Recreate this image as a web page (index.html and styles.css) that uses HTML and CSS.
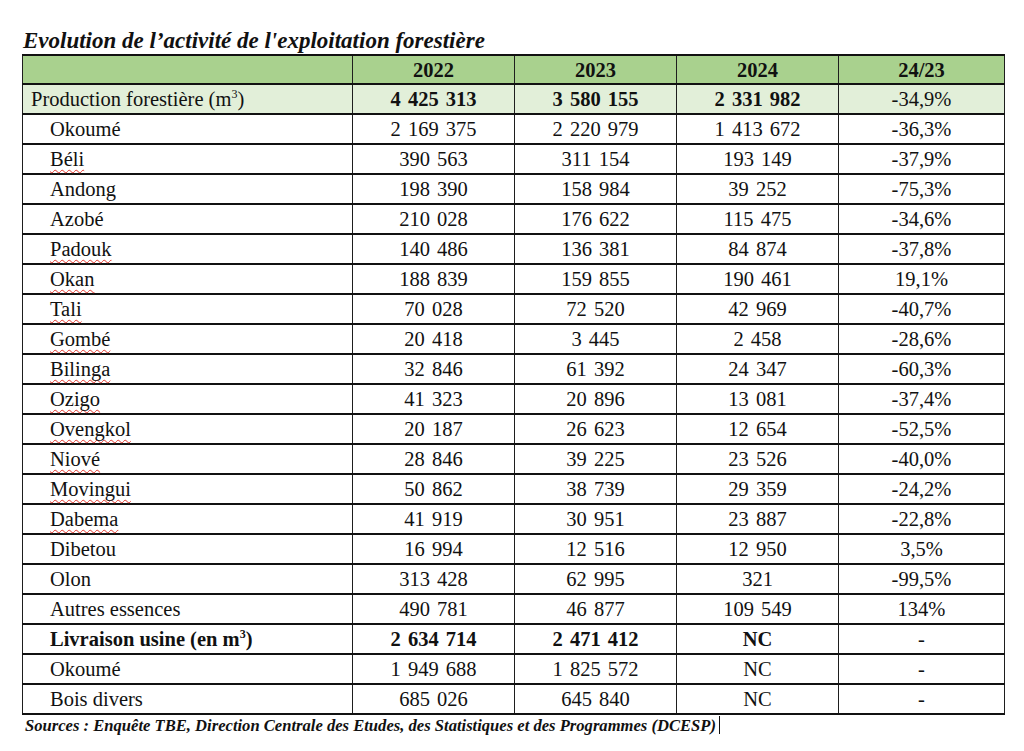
FILE: index.html
```html
<!DOCTYPE html>
<html lang="fr">
<head>
<meta charset="utf-8">
<title>Evolution de l'activité de l'exploitation forestière</title>
<link rel="stylesheet" href="styles.css">
</head>
<body>
<div class="page">
  <h1 class="title">Evolution de l’activité de l'exploitation forestière</h1>
  <table class="data">
    <colgroup>
      <col class="c-label"><col class="c-num"><col class="c-num"><col class="c-num"><col class="c-pct">
    </colgroup>
    <thead>
      <tr class="head"><th></th><th>2022</th><th>2023</th><th>2024</th><th>24/23</th></tr>
    </thead>
    <tbody>
      <tr class="total"><td class="lbl">Production forestière (m<sup>3</sup>)</td><td class="b">4 425 313</td><td class="b">3 580 155</td><td class="b">2 331 982</td><td>-34,9%</td></tr>
      <tr><td class="lbl ind">Okoumé</td><td>2 169 375</td><td>2 220 979</td><td>1 413 672</td><td>-36,3%</td></tr>
      <tr><td class="lbl ind"><span class="sp">Béli</span></td><td>390 563</td><td>311 154</td><td>193 149</td><td>-37,9%</td></tr>
      <tr><td class="lbl ind">Andong</td><td>198 390</td><td>158 984</td><td>39 252</td><td>-75,3%</td></tr>
      <tr><td class="lbl ind">Azobé</td><td>210 028</td><td>176 622</td><td>115 475</td><td>-34,6%</td></tr>
      <tr><td class="lbl ind"><span class="sp">Padouk</span></td><td>140 486</td><td>136 381</td><td>84 874</td><td>-37,8%</td></tr>
      <tr><td class="lbl ind"><span class="sp">Okan</span></td><td>188 839</td><td>159 855</td><td>190 461</td><td>19,1%</td></tr>
      <tr><td class="lbl ind"><span class="sp">Tali</span></td><td>70 028</td><td>72 520</td><td>42 969</td><td>-40,7%</td></tr>
      <tr><td class="lbl ind"><span class="sp">Gombé</span></td><td>20 418</td><td>3 445</td><td>2 458</td><td>-28,6%</td></tr>
      <tr><td class="lbl ind"><span class="sp">Bilinga</span></td><td>32 846</td><td>61 392</td><td>24 347</td><td>-60,3%</td></tr>
      <tr><td class="lbl ind"><span class="sp">Ozigo</span></td><td>41 323</td><td>20 896</td><td>13 081</td><td>-37,4%</td></tr>
      <tr><td class="lbl ind"><span class="sp">Ovengkol</span></td><td>20 187</td><td>26 623</td><td>12 654</td><td>-52,5%</td></tr>
      <tr><td class="lbl ind"><span class="sp">Niové</span></td><td>28 846</td><td>39 225</td><td>23 526</td><td>-40,0%</td></tr>
      <tr><td class="lbl ind"><span class="sp">Movingui</span></td><td>50 862</td><td>38 739</td><td>29 359</td><td>-24,2%</td></tr>
      <tr><td class="lbl ind"><span class="sp">Dabema</span></td><td>41 919</td><td>30 951</td><td>23 887</td><td>-22,8%</td></tr>
      <tr><td class="lbl ind">Dibetou</td><td>16 994</td><td>12 516</td><td>12 950</td><td>3,5%</td></tr>
      <tr><td class="lbl ind">Olon</td><td>313 428</td><td>62 995</td><td>321</td><td>-99,5%</td></tr>
      <tr><td class="lbl ind">Autres essences</td><td>490 781</td><td>46 877</td><td>109 549</td><td>134%</td></tr>
      <tr><td class="lbl ind b">Livraison usine (en m<sup>3</sup>)</td><td class="b">2 634 714</td><td class="b">2 471 412</td><td class="b">NC</td><td>-</td></tr>
      <tr><td class="lbl ind">Okoumé</td><td>1 949 688</td><td>1 825 572</td><td>NC</td><td>-</td></tr>
      <tr><td class="lbl ind">Bois divers</td><td>685 026</td><td>645 840</td><td>NC</td><td>-</td></tr>
    </tbody>
  </table>
  <p class="source">Sources : Enquête TBE, Direction Centrale des Etudes, des Statistiques et des Programmes (DCESP)<span class="caret"></span></p>
</div>
</body>
</html>
```

FILE: styles.css
```css
html, body {
  margin: 0;
  padding: 0;
  background: #ffffff;
}

body {
  font-family: "Liberation Serif", "Times New Roman", serif;
  color: #111111;
}

.page {
  width: 982px;
  padding: 27px 0 0 22px;
}

.title {
  margin: 0;
  height: 27px;
  font-size: 23px;
  line-height: 27px;
  font-weight: bold;
  font-style: italic;
  padding-left: 1px;
}

.data {
  border-collapse: collapse;
  table-layout: fixed;
  width: 982px;
  font-size: 20.5px;
}

.c-label { width: 330px; }
.c-num { width: 162px; }
.c-pct { width: 166px; }

.data th,
.data td {
  height: 28px;
  padding: 0;
  text-align: center;
  border-left: 1px solid #1e1e1e;
  border-right: 1px solid #1e1e1e;
  border-top: 2px solid #111111;
  border-bottom: 2px solid #111111;
  line-height: 26px;
  vertical-align: middle;
  white-space: nowrap;
  word-spacing: 2px;
}

.data th {
  font-weight: bold;
}

.head th {
  background: #a9d18e;
  height: 27px;
}

.total td {
  background: #e2efd9;
}

.data td.lbl {
  text-align: left;
  padding-left: 8px;
  word-spacing: 0;
}

.data td.ind {
  padding-left: 27px;
}

.b {
  font-weight: bold;
}

sup {
  font-size: 12px;
  line-height: 0;
  vertical-align: 8px;
}

.sp {
  text-decoration: underline wavy #e0362c;
  text-decoration-thickness: 1px;
  text-underline-offset: 3px;
  text-decoration-skip-ink: none;
}

.source {
  margin: 0;
  padding: 1px 0 0 3px;
  font-size: 16.6px;
  line-height: 19px;
  font-weight: bold;
  font-style: italic;
}

.caret {
  display: inline-block;
  width: 1px;
  height: 18px;
  margin-left: 3px;
  background: #111111;
  vertical-align: -3px;
}
```
